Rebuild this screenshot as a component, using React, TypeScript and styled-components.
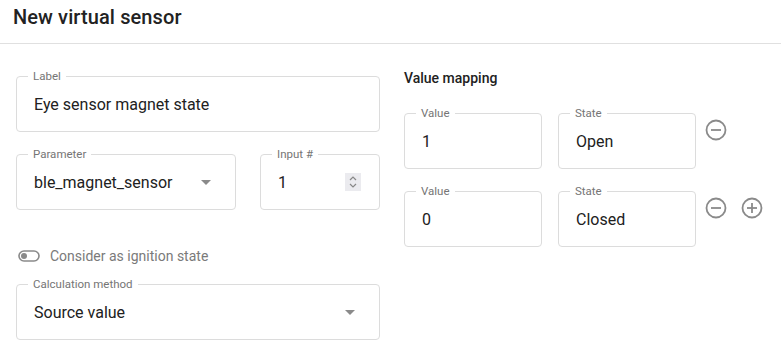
import React from 'react'
import styled, { createGlobalStyle } from 'styled-components'

const GlobalStyle = createGlobalStyle`
  html, body {
    margin: 0;
    padding: 0;
    background: #fff;
  }
  body {
    font-family: Roboto, "Liberation Sans", Arial, sans-serif;
    color: #212121;
  }
`

const Page = styled.div`
  width: 781px;
  height: 353px;
  overflow: hidden;
  background: #fff;
`

const Header = styled.div`
  height: 43px;
  border-bottom: 1px solid #e0e0e0;
  display: flex;
  align-items: center;
  padding: 0 13px;
  box-sizing: content-box;
`

const Title = styled.h2`
  margin: 0;
  margin-top: -10px;
  font-size: 20px;
  font-weight: 500;
  letter-spacing: 0.1px;
  color: #222;
`

const Body = styled.div`
  display: flex;
  gap: 24px;
  padding: 32px 16px 0 16px;
`

const Column = styled.div<{ $width: number }>`
  width: ${(p) => p.$width}px;
  display: flex;
  flex-direction: column;
`

const Row = styled.div<{ $gap?: number }>`
  display: flex;
  gap: ${(p) => p.$gap ?? 24}px;
  margin-bottom: 22px;
`

const FieldBox = styled.div<{ $width?: number }>`
  position: relative;
  box-sizing: border-box;
  height: 56px;
  width: ${(p) => (p.$width ? `${p.$width}px` : '100%')};
  flex: ${(p) => (p.$width ? 'none' : '1 1 auto')};
  border: 1px solid #dcdcdc;
  border-radius: 4px;
  display: flex;
  align-items: center;
  padding: 0 17px;
`

const FieldLabel = styled.span`
  position: absolute;
  top: -8px;
  left: 11px;
  padding: 0 5px;
  background: #fff;
  font-size: 11.5px;
  line-height: 14px;
  color: #757575;
`

const FieldValue = styled.span`
  flex: 1;
  font-size: 16px;
  color: #212121;
  white-space: nowrap;
`

const Caret = styled.span`
  width: 0;
  height: 0;
  border-left: 5px solid transparent;
  border-right: 5px solid transparent;
  border-top: 5px solid #8a8a8a;
  margin-right: 7px;
  margin-top: 1px;
`

const Spinner = styled.span`
  width: 16px;
  height: 18px;
  background: #ebebef;
  display: flex;
  align-items: center;
  justify-content: center;
  margin-right: 1px;
`

const ToggleRow = styled.div`
  display: flex;
  align-items: center;
  gap: 10px;
  margin: 10px 0 14px 2px;
  height: 28px;
  font-size: 14px;
  color: #7a7a7a;
`

const SectionTitle = styled.div`
  font-size: 14px;
  font-weight: 500;
  color: #212121;
  height: 20px;
  line-height: 20px;
  margin-top: -8px;
  margin-bottom: 25px;
`

const MapRow = styled.div`
  display: flex;
  gap: 16px;
  margin-bottom: 22px;
  align-items: flex-start;
`

const IconGroup = styled.div`
  display: flex;
  gap: 12px;
  margin-left: -8px;
  margin-top: 5px;
`

const IconButton = styled.span`
  width: 24px;
  height: 24px;
  display: inline-flex;
  color: #8a8a8a;
`

const Field = ({
  label,
  value,
  width,
  children,
}: {
  label: string
  value: string
  width?: number
  children?: React.ReactNode
}) => (
  <FieldBox $width={width}>
    <FieldLabel>{label}</FieldLabel>
    <FieldValue>{value}</FieldValue>
    {children}
  </FieldBox>
)

const MinusIcon = () => (
  <svg width="24" height="24" viewBox="0 0 24 24" fill="none" stroke="currentColor" strokeWidth="1.8">
    <circle cx="12" cy="12" r="9.5" />
    <line x1="7" y1="12" x2="17" y2="12" />
  </svg>
)

const PlusIcon = () => (
  <svg width="24" height="24" viewBox="0 0 24 24" fill="none" stroke="currentColor" strokeWidth="1.8">
    <circle cx="12" cy="12" r="9.5" />
    <line x1="7" y1="12" x2="17" y2="12" />
    <line x1="12" y1="7" x2="12" y2="17" />
  </svg>
)

const ToggleIcon = () => (
  <svg width="22" height="12" viewBox="0 0 22 12" fill="none">
    <rect x="1" y="1" width="20" height="10" rx="5" stroke="#8a8a8a" strokeWidth="1.6" />
    <circle cx="6" cy="6" r="3" fill="#8a8a8a" />
  </svg>
)

const mappings = [
  { value: '1', state: 'Open', canAdd: false },
  { value: '0', state: 'Closed', canAdd: true },
]

export default function App() {
  return (
    <Page>
      <GlobalStyle />
      <Header>
        <Title>New virtual sensor</Title>
      </Header>
      <Body>
        <Column $width={364}>
          <Row>
            <Field label="Label" value="Eye sensor magnet state" />
          </Row>
          <Row>
            <Field label="Parameter" value="ble_magnet_sensor" width={220}>
              <Caret />
            </Field>
            <Field label="Input #" value="1" width={120}>
              <Spinner>
                <svg width="10" height="14" viewBox="0 0 10 14" fill="none" stroke="#888" strokeWidth="1.2">
                  <polyline points="2,5 5,2 8,5" />
                  <polyline points="2,9 5,12 8,9" />
                </svg>
              </Spinner>
            </Field>
          </Row>
          <ToggleRow>
            <ToggleIcon />
            Consider as ignition state
          </ToggleRow>
          <Row>
            <Field label="Calculation method" value="Source value">
              <Caret />
            </Field>
          </Row>
        </Column>
        <Column $width={360}>
          <SectionTitle>Value mapping</SectionTitle>
          {mappings.map((m, i) => (
            <MapRow key={i}>
              <Field label="Value" value={m.value} width={138} />
              <Field label="State" value={m.state} width={138} />
              <IconGroup>
                <IconButton>
                  <MinusIcon />
                </IconButton>
                {m.canAdd && (
                  <IconButton>
                    <PlusIcon />
                  </IconButton>
                )}
              </IconGroup>
            </MapRow>
          ))}
        </Column>
      </Body>
    </Page>
  )
}
